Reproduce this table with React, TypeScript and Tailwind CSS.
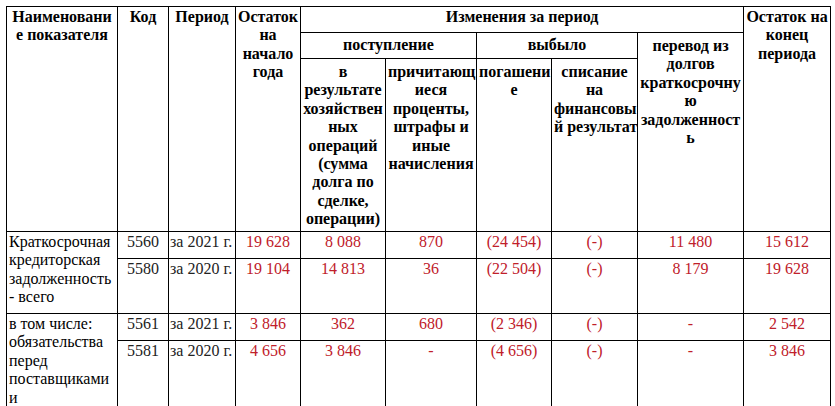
import React from "react";

const th =
  "border border-black align-top text-center font-bold whitespace-nowrap px-[2px] pt-[1px]";
const td = "border border-black align-top whitespace-nowrap px-[1px] pt-[1px]";
const num = td + " text-center text-[#c0202a]";

type Row = {
  code: string;
  period: string;
  values: string[];
};

function Lines({ items }: { items: string[] }) {
  return (
    <>
      {items.map((s, i) => (
        <React.Fragment key={i}>
          {i > 0 && <br />}
          {s}
        </React.Fragment>
      ))}
    </>
  );
}

const groups: { name: string[]; rows: Row[]; heights: string[] }[] = [
  {
    name: ["Краткосрочная", "кредиторская", "задолженность", "- всего"],
    heights: ["h-[27px]", "h-[55px]"],
    rows: [
      {
        code: "5560",
        period: "за 2021 г.",
        values: ["19 628", "8 088", "870", "(24 454)", "(-)", "11 480", "15 612"],
      },
      {
        code: "5580",
        period: "за 2020 г.",
        values: ["19 104", "14 813", "36", "(22 504)", "(-)", "8 179", "19 628"],
      },
    ],
  },
  {
    name: ["в том числе:", "обязательства", "перед", "поставщиками", "и", "подрядчиками"],
    heights: ["h-[27px]", "h-[90px]"],
    rows: [
      {
        code: "5561",
        period: "за 2021 г.",
        values: ["3 846", "362", "680", "(2 346)", "(-)", "-", "2 542"],
      },
      {
        code: "5581",
        period: "за 2020 г.",
        values: ["4 656", "3 846", "-", "(4 656)", "(-)", "-", "3 846"],
      },
    ],
  },
];

export default function App() {
  return (
    <div className="h-[406px] w-[835px] overflow-hidden bg-white pl-[6px] pt-[6px]">
      <table
        className="table-fixed border-collapse w-[824px] text-[16px] leading-[18.4px] text-black"
        style={{
          fontFamily:
            '"Liberation Serif", "Times New Roman", "DejaVu Serif Condensed", "DejaVu Serif", serif',
        }}
      >
        <colgroup>
          <col className="w-[111px]" />
          <col className="w-[51px]" />
          <col className="w-[67px]" />
          <col className="w-[65px]" />
          <col className="w-[85px]" />
          <col className="w-[91px]" />
          <col className="w-[75px]" />
          <col className="w-[86px]" />
          <col className="w-[106px]" />
          <col className="w-[87px]" />
        </colgroup>
        <thead>
          <tr className="h-[26px]">
            <th rowSpan={3} className={th}>
              <Lines items={["Наименовани", "е показателя"]} />
            </th>
            <th rowSpan={3} className={th}>
              Код
            </th>
            <th rowSpan={3} className={th}>
              Период
            </th>
            <th rowSpan={3} className={th}>
              <Lines items={["Остаток", "на", "начало", "года"]} />
            </th>
            <th colSpan={5} className={th}>
              Изменения за период
            </th>
            <th rowSpan={3} className={th}>
              <Lines items={["Остаток на", "конец", "периода"]} />
            </th>
          </tr>
          <tr className="h-[26px]">
            <th colSpan={2} className={th + " pt-[3px]"}>
              поступление
            </th>
            <th colSpan={2} className={th + " pt-[3px]"}>
              выбыло
            </th>
            <th rowSpan={2} className={th + " pt-[4px]"}>
              <Lines
                items={["перевод из", "долгов", "краткосрочну", "ю", "задолженност", "ь"]}
              />
            </th>
          </tr>
          <tr className="h-[173px]">
            <th className={th + " pt-[4px]"}>
              <Lines
                items={[
                  "в",
                  "результате",
                  "хозяйствен",
                  "ных",
                  "операций",
                  "(сумма",
                  "долга по",
                  "сделке,",
                  "операции)",
                ]}
              />
            </th>
            <th className={th + " pt-[4px]"}>
              <Lines
                items={["причитающ", "иеся", "проценты,", "штрафы и", "иные", "начисления"]}
              />
            </th>
            <th className={th + " pt-[4px]"}>
              <Lines items={["погашени", "е"]} />
            </th>
            <th className={th + " pt-[4px] px-0"}>
              <Lines items={["списание", "на", "финансовы", "й результат"]} />
            </th>
          </tr>
        </thead>
        <tbody>
          {groups.map((g, gi) =>
            g.rows.map((r, ri) => (
              <tr key={`${gi}-${ri}`} className={g.heights[ri]}>
                {ri === 0 && (
                  <td rowSpan={g.rows.length} className={td + " text-left pl-[2px]"}>
                    <Lines items={g.name} />
                  </td>
                )}
                <td className={td + " text-center text-[#222]"}>{r.code}</td>
                <td className={td + " text-left text-[#222]"}>{r.period}</td>
                {r.values.map((v, vi) => (
                  <td key={vi} className={num}>
                    {v}
                  </td>
                ))}
              </tr>
            ))
          )}
        </tbody>
      </table>
    </div>
  );
}
